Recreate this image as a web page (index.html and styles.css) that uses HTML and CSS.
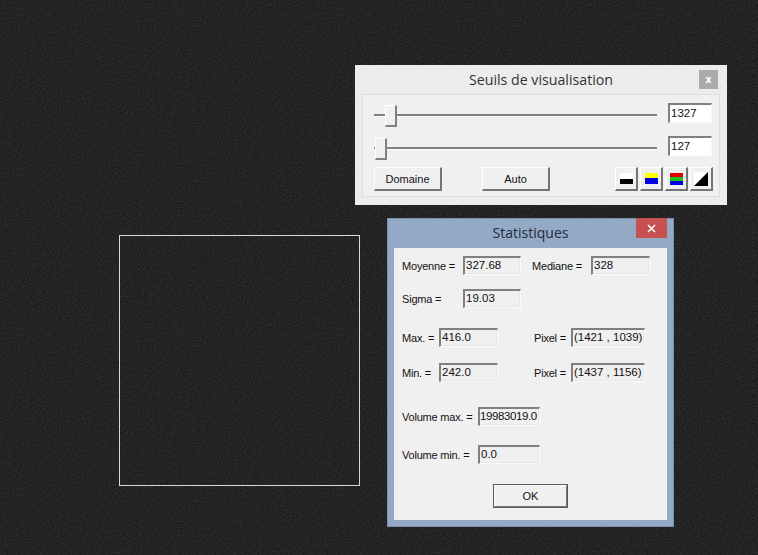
FILE: index.html
```html
<!DOCTYPE html>
<html lang="fr">
<head>
<meta charset="utf-8">
<title>Seuils de visualisation</title>
<link rel="stylesheet" href="styles.css">
</head>
<body>
<div class="image-frame"></div>

<section class="window seuils">
  <header class="seuils-title">
    <span class="title-text">Seuils de visualisation</span>
    <button class="seuils-close">x</button>
  </header>
  <div class="seuils-panel">
    <div class="slider-row">
      <div class="slider"><span class="track"></span><span class="thumb thumb-high"></span></div>
      <div class="field white w44">1327</div>
    </div>
    <div class="slider-row row-second">
      <div class="slider"><span class="track"></span><span class="thumb thumb-low"></span></div>
      <div class="field white w44">127</div>
    </div>
    <div class="button-row">
      <button class="btn w68">Domaine</button>
      <button class="btn w68 auto">Auto</button>
      <div class="palette">
        <button class="btn icon"><svg width="13" height="11" viewBox="0 0 13 11"><rect width="13" height="6" fill="#fff"/><rect y="6" width="13" height="5" fill="#000"/></svg></button>
        <button class="btn icon"><svg width="13" height="11" viewBox="0 0 13 11"><rect width="13" height="5" fill="#ffff00"/><rect y="5" width="13" height="6" fill="#0000e0"/></svg></button>
        <button class="btn icon"><svg width="13" height="12" viewBox="0 0 13 12"><rect width="13" height="4" fill="#e00000"/><rect y="4" width="13" height="4" fill="#20c020"/><rect y="8" width="13" height="4" fill="#0000e0"/></svg></button>
        <button class="btn icon"><svg width="14" height="14" viewBox="0 0 14 14"><rect width="14" height="14" fill="#fff"/><path d="M0 14 L14 0 V14 Z" fill="#000"/></svg></button>
      </div>
    </div>
  </div>
</section>

<section class="window stats">
  <header class="stats-title">
    <span class="stats-text">Statistiques</span>
    <button class="stats-close"><svg width="9" height="9" viewBox="0 0 9 9"><path d="M1 1 L8 8 M8 1 L1 8" stroke="#fff" stroke-width="1.6"/></svg></button>
  </header>
  <div class="stats-body">
    <div class="row r-moy">
      <span class="lbl l61">Moyenne =</span><div class="field w58">327.68</div>
      <span class="lbl l59 gap11">Mediane =</span><div class="field w59">328</div>
    </div>
    <div class="row r-sig">
      <span class="lbl l61">Sigma =</span><div class="field w58">19.03</div>
    </div>
    <div class="row r-max">
      <span class="lbl l37">Max. =</span><div class="field w59">416.0</div>
      <span class="lbl l37 gap36">Pixel =</span><div class="field w74">(1421 , 1039)</div>
    </div>
    <div class="row r-min">
      <span class="lbl l37">Min. =</span><div class="field w59">242.0</div>
      <span class="lbl l37 gap36">Pixel =</span><div class="field w74">(1437 , 1156)</div>
    </div>
    <div class="row r-vmax">
      <span class="lbl l76">Volume max. =</span><div class="field w62 tight">19983019.0</div>
    </div>
    <div class="row r-vmin">
      <span class="lbl l76">Volume min. =</span><div class="field w62">0.0</div>
    </div>
    <div class="ok-row"><button class="btn ok">OK</button></div>
  </div>
</section>
</body>
</html>
```

FILE: styles.css
```css
* { box-sizing: border-box; }
html, body { margin: 0; height: 100%; }
body {
  position: relative;
  width: 758px;
  height: 555px;
  overflow: hidden;
  background-color: #232323;
  background-image: url("data:image/svg+xml,%3Csvg xmlns='http://www.w3.org/2000/svg' width='758' height='555'%3E%3Cfilter id='n' color-interpolation-filters='sRGB' x='0' y='0' width='100%25' height='100%25'%3E%3CfeTurbulence type='fractalNoise' baseFrequency='.8' numOctaves='2' seed='4'/%3E%3CfeColorMatrix values='.16 0 0 0 .06 .16 0 0 0 .06 .16 0 0 0 .06 0 0 0 0 1'/%3E%3C/filter%3E%3Crect width='758' height='555' filter='url(%23n)'/%3E%3C/svg%3E");
  font-family: "Liberation Sans", Arial, sans-serif;
  font-size: 11px;
  color: #111;
}
button { font: inherit; color: inherit; padding: 0; margin: 0; }

.image-frame {
  position: absolute;
  left: 119px; top: 235px;
  width: 241px; height: 251px;
  border: 1px solid #d8d8d8;
}
.window { position: absolute; }

/* Seuils */
.seuils {
  left: 355px; top: 65px;
  width: 372px; height: 140px;
  background: #ececec;
  padding: 0 7px 8px 7px;
  display: flex;
  flex-direction: column;
}
.seuils-title { height: 29px; display: flex; align-items: flex-start; position: relative; flex: none; }
.title-text {
  flex: 1;
  text-align: center;
  font: 14.2px/30px "Open Sans", sans-serif;
  color: #333;
}
.seuils-close {
  position: absolute;
  right: 2px; top: 5px;
  width: 19px; height: 19px;
  border: 0;
  background: #ababab;
  color: #fff;
  font: bold 10px/17px "Open Sans", sans-serif;
}
.seuils-panel {
  flex: 1;
  background: #f0f0f0;
  border: 1px solid #dedede;
  padding: 8px 6px 0 11px;
}
.slider-row { display: flex; align-items: flex-start; height: 20px; }
.row-second { margin-top: 13px; }
.slider { position: relative; width: 283px; height: 20px; margin-right: 11px; flex: none; }
.track {
  position: absolute;
  left: 0; right: 0; top: 11px;
  height: 3px;
  background: #808080;
  border-bottom: 1px solid #fff;
}
.thumb {
  position: absolute;
  top: 2px;
  width: 12px; height: 22px;
  background: #f0f0f0;
  border: 1px solid;
  border-color: #fff #808080 #808080 #fff;
  border-width: 1px 2px 2px 1px;
}
.thumb-high { left: 11px; }
.thumb-low { left: 1px; }

.field {
  height: 19px;
  background: #f0f0f0;
  border: 1px solid;
  border-color: #808080 #fafafa #fafafa #808080;
  border-width: 2px 1px 1px 2px;
  box-shadow: inset -1px -1px 0 #e6e6e6;
  font-size: 11.5px;
  line-height: 15px;
  padding-left: 1px;
  white-space: nowrap;
  overflow: hidden;
  flex: none;
  color: #111;
}
.tight { letter-spacing: -.4px; padding-left: 0; }
.white { background: #fff; box-shadow: none; height: 20px; line-height: 16px; }
.w44 { width: 44px; }
.w58 { width: 58px; }
.w59 { width: 59px; }
.w62 { width: 62px; }
.w74 { width: 74px; }

.btn {
  background: #f0f0f0;
  border: 1px solid;
  border-color: #fff #757575 #757575 #fff;
  border-width: 1px 2px 2px 1px;
  display: flex;
  align-items: center;
  justify-content: center;
  flex: none;
  font-size: 11px;
}
.button-row { display: flex; margin-top: 11px; }
.w68 { width: 68px; height: 24px; }
.auto { margin-left: 40px; }
.palette { display: flex; flex: none; gap: 2px; margin-left: 65px; }
.icon { width: 23px; height: 24px; }

/* Statistiques */
.stats {
  left: 387px; top: 218px;
  width: 287px; height: 309px;
  background: #93a9c6;
  box-shadow: inset 0 0 0 1px #7d90aa;
  padding: 0 7px 7px 7px;
  display: flex;
  flex-direction: column;
}
.stats-title { height: 30px; flex: none; position: relative; }
.stats-text {
  display: block;
  text-align: center;
  font: 14px/29px "Open Sans", sans-serif;
  color: #222c3a;
}
.stats-close {
  position: absolute;
  right: 0; top: 0;
  width: 31px; height: 20px;
  background: #c75050;
  border: 0;
  display: flex; align-items: center; justify-content: center;
}
.stats-body {
  flex: 1;
  background: #f0f0f0;
  padding: 8px 0 0 8px;
  display: flex;
  flex-direction: column;
}
.row { display: flex; align-items: center; height: 19px; }
.lbl { flex: none; font-size: 11px; white-space: nowrap; letter-spacing: -.2px; }
.l61 { width: 61px; }
.l59 { width: 59px; }
.l37 { width: 37px; }
.l76 { width: 76px; }
.gap11 { margin-left: 11px; }
.gap36 { margin-left: 36px; }
.r-sig { margin-top: 14px; }
.r-max { margin-top: 20px; }
.r-min { margin-top: 16px; }
.r-vmax { margin-top: 25px; }
.r-vmin { margin-top: 19px; }
.ok-row { margin: 20px 0 0 91px; }
.ok {
  width: 75px; height: 24px;
  outline: 1px solid #5a5a5a;
  outline-offset: -1px;
  border: 2px solid;
  border-color: #fff #777 #777 #fff;
}
```
